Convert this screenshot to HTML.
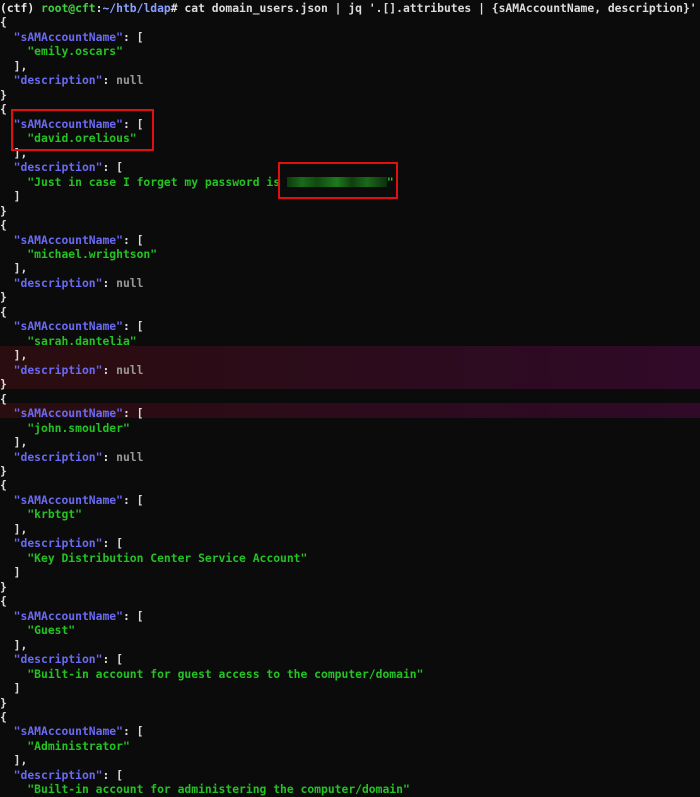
<!DOCTYPE html>
<html><head><meta charset="utf-8"><style>
html,body{margin:0;padding:0;background:#0b0b0b;width:700px;height:786px;overflow:hidden;}
pre{margin:0;position:absolute;left:0;top:1px;font-family:"DejaVu Sans Mono","Liberation Mono",monospace;font-size:11.35px;line-height:14.47px;color:#dcdcdc;font-weight:bold;white-space:pre;}
.b{color:#6a6af2}.g{color:#22c322}.n{color:#9a9a9a}.p{color:#e8e8e8}.gp{color:#3fd23f}.bl{color:#8aa0ff}
.band{position:absolute;left:0;width:700px;background:linear-gradient(90deg,#2a0d0e,#2c0b1e 60%,#300a28);}
.box{position:absolute;border:2px solid #e01010;}
.blur{display:inline-block;width:100px;height:10px;vertical-align:-1px;background:linear-gradient(90deg,#0c3a0c,#1a6a1a 15%,#0f4a0f 30%,#1d7a1d 50%,#0e400e 65%,#1a6a1a 80%,#0c300c);}
</style></head><body>
<div class="band" style="top:346px;height:43px"></div>
<div class="band" style="top:403px;height:15px"></div>
<pre><span class="p">(ctf) </span><span class="gp">root@cft</span>:<span class="bl">~/htb/ldap</span># cat domain_users.json | jq '.[].attributes | {sAMAccountName, description}'
{
  <span class="b">"sAMAccountName"</span>: [
    <span class="g">"emily.oscars"</span>
  ],
  <span class="b">"description"</span>: <span class="n">null</span>
}
{
  <span class="b">"sAMAccountName"</span>: [
    <span class="g">"david.orelious"</span>
  ],
  <span class="b">"description"</span>: [
    <span class="g">"Just in case I forget my password is <span class="blur"></span>"</span>
  ]
}
{
  <span class="b">"sAMAccountName"</span>: [
    <span class="g">"michael.wrightson"</span>
  ],
  <span class="b">"description"</span>: <span class="n">null</span>
}
{
  <span class="b">"sAMAccountName"</span>: [
    <span class="g">"sarah.dantelia"</span>
  ],
  <span class="b">"description"</span>: <span class="n">null</span>
}
{
  <span class="b">"sAMAccountName"</span>: [
    <span class="g">"john.smoulder"</span>
  ],
  <span class="b">"description"</span>: <span class="n">null</span>
}
{
  <span class="b">"sAMAccountName"</span>: [
    <span class="g">"krbtgt"</span>
  ],
  <span class="b">"description"</span>: [
    <span class="g">"Key Distribution Center Service Account"</span>
  ]
}
{
  <span class="b">"sAMAccountName"</span>: [
    <span class="g">"Guest"</span>
  ],
  <span class="b">"description"</span>: [
    <span class="g">"Built-in account for guest access to the computer/domain"</span>
  ]
}
{
  <span class="b">"sAMAccountName"</span>: [
    <span class="g">"Administrator"</span>
  ],
  <span class="b">"description"</span>: [
    <span class="g">"Built-in account for administering the computer/domain"</span>
</pre>
<div class="box" style="left:11px;top:109px;width:139px;height:38px"></div>
<div class="box" style="left:278px;top:162px;width:116px;height:33px"></div>
</body></html>
